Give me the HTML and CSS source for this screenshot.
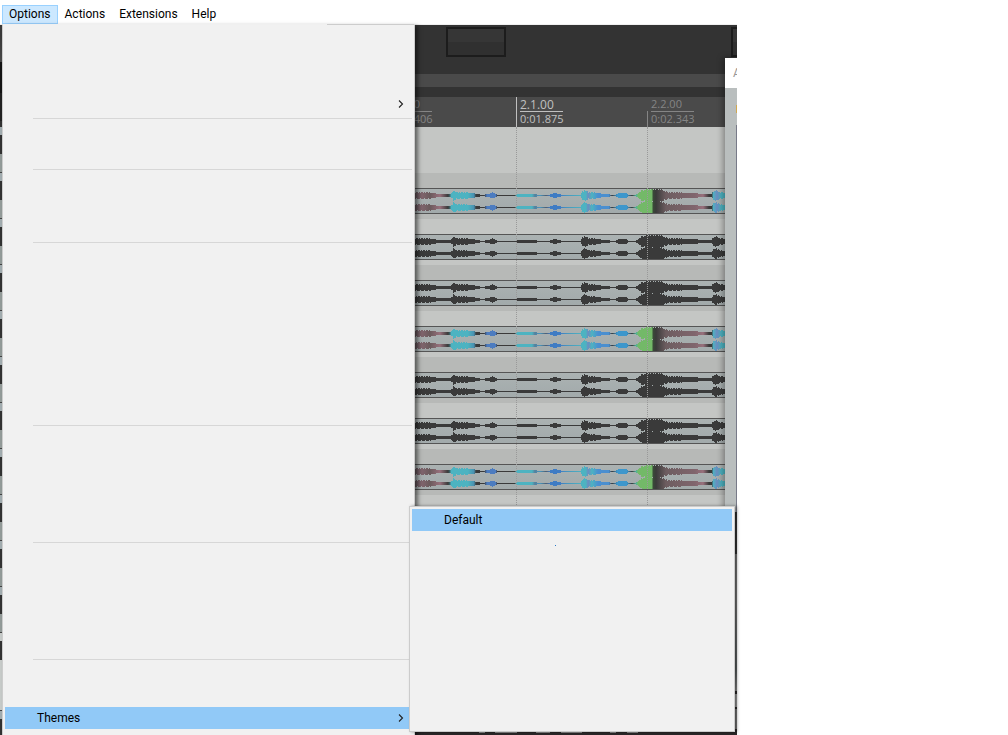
FILE: index.html
```
<!DOCTYPE html>
<html lang="en">
<head>
  <meta charset="UTF-8">
  <title>Options</title>
  <link rel="stylesheet" href="styles.css">
</head>
<body>
  <nav class="menubar">
    <div class="menubar-entry">
      <button class="menubar-button open">Options</button>
      <ul class="menu options-menu">
        <li class="row"></li>
        <li class="row"></li>
        <li class="row"></li>
        <li class="row"><button class="item" aria-label="Submenu"><svg class="arrow" viewBox="0 0 6 8"><path d="M1 0.5 L4.5 4 L1 7.5"/></svg></button></li>
        <li class="separator"></li>
        <li class="row"></li>
        <li class="row"></li>
        <li class="separator"></li>
        <li class="row"></li>
        <li class="row"></li>
        <li class="row"></li>
        <li class="separator"></li>
        <li class="row"></li>
        <li class="row"></li>
        <li class="row"></li>
        <li class="row"></li>
        <li class="row"></li>
        <li class="row"></li>
        <li class="row"></li>
        <li class="row"></li>
        <li class="separator"></li>
        <li class="row"></li>
        <li class="row"></li>
        <li class="row"></li>
        <li class="row"></li>
        <li class="row"></li>
        <li class="separator"></li>
        <li class="row"></li>
        <li class="row"></li>
        <li class="row"></li>
        <li class="row"></li>
        <li class="row"></li>
        <li class="separator"></li>
        <li class="row"></li>
        <li class="row"></li>
        <li class="row">
          <button class="item active">Themes<svg class="arrow" viewBox="0 0 6 8"><path d="M1 0.5 L4.5 4 L1 7.5"/></svg></button>
          <ul class="menu submenu">
            <li class="row"><button class="item active">Default</button></li>
            <li class="row speck"></li>
            <li class="row"></li>
            <li class="row"></li>
            <li class="row"></li>
            <li class="row"></li>
            <li class="row"></li>
            <li class="row"></li>
            <li class="row"></li>
            <li class="row"></li>
          </ul>
        </li>
        <li class="row"></li>
      </ul>
    </div>
    <button class="menubar-button">Actions</button>
    <button class="menubar-button">Extensions</button>
    <button class="menubar-button">Help</button>
  </nav>

  <main class="app">
    <div class="track-panel">
      <div class="panel-top"></div>
      <div class="panel-tracks"></div>
      <div class="panel-master"></div>
      <div class="panel-foot"></div>
    </div>

    <div class="arrange">
      <div class="toolbar">
        <div class="toolbox"></div>
        <div class="toolbox"></div>
      </div>
      <div class="scroll-strip"></div>
      <div class="ruler">
        <div class="mark"><span class="beat">1.2.00</span><span class="time">0:01.406</span></div>
        <div class="mark major"><span class="beat">2.1.00</span><span class="time">0:01.875</span></div>
        <div class="mark"><span class="beat">2.2.00</span><span class="time">0:02.343</span></div>
      </div>
      <div class="lanes" id="lanes">
        <div class="grid"><i></i><i></i><i></i></div>
        <div class="lane"></div>
      </div>
      <div class="mixer"><div class="meters"></div></div>
    </div>

    <aside class="window">
      <div class="window-title">A</div>
      <div class="window-body"></div>
    </aside>
  </main>

  <svg class="defs" aria-hidden="true">
    <defs>
      <linearGradient id="spectral" gradientUnits="userSpaceOnUse" x1="385" y1="0" x2="737" y2="0"></linearGradient>
    </defs>
  </svg>

  <script src="script.js"></script>
</body>
</html>
```
FILE: styles.css
```
* { box-sizing: border-box; }
body {
  margin: 0;
  height: 100vh;
  display: flex;
  flex-direction: column;
  overflow: hidden;
  background: #fff;
  font: 12px/16px Roboto, "Open Sans", sans-serif;
  color: #000;
}
button { font: inherit; color: inherit; border: 0; background: none; margin: 0; }
ul { list-style: none; margin: 0; padding: 0; }
.defs { position: absolute; width: 0; height: 0; }

/* menu bar */
.menubar { display: flex; height: 24px; padding: 5px 0 0 2px; }
.menubar-entry { position: relative; z-index: 5; }
.menubar-button { display: block; height: 19px; padding: 0 6px; border: 1px solid transparent; line-height: 17px; }
.menubar-button.open { background: #cce8ff; border-color: #99d1ff; }

/* menus */
.menu { position: absolute; background: #f1f1f1; border: 1px solid #ccc; padding: 2px; }
.options-menu { top: 19px; left: 0; width: 413px; border-top-color: #f0f0f0; box-shadow: 3px 2px 4px rgba(0, 0, 0, .5); }
.options-menu::before { content: ""; position: absolute; top: -1px; right: 0; width: 87px; height: 1px; background: #ccc; }
.row { position: relative; height: 22px; }
.item { display: flex; align-items: center; justify-content: space-between; width: 100%; height: 22px; padding: 0 8px 0 32px; text-align: left; }
.item[aria-label] { justify-content: flex-end; }
.item.active { background: #91c9f7; }
.arrow { width: 6px; height: 8px; fill: none; stroke: #222; stroke-width: 1.1; }
.separator { height: 7px; padding: 3px 0 3px 28px; }
.separator::after { content: ""; display: block; height: 1px; background: #d7d7d7; }
.submenu { left: calc(100% - 3px); bottom: -3px; width: 326px; box-shadow: 2px 0 3px rgba(0, 0, 0, .4); }
.speck::after { content: ""; display: block; width: 1px; height: 1px; margin-left: 143px; position: relative; top: 14px; background: #2a7ac8; }

/* application behind the menus */
.app { position: relative; flex: 1; display: flex; margin-right: 271px; border-top: 1px solid #f0f0f0; overflow: hidden; background: #333; }
.track-panel { width: 385px; display: flex; flex-direction: column; }
.panel-top { height: 102px; background: linear-gradient(#3a3a3a 0 10px, #4a4a4a 37px, #151515 37px 68px, #222 68px 96px, #333 96px); }
.panel-tracks { height: 506px; background: repeating-linear-gradient(#a3aeb1 0 8px, #333 8px 27px, #949c9a 27px 45px, #444 45px 46px); }
.panel-master { height: 86px; background: linear-gradient(#c8ccca 0 8px, #333 8px 27px, #c8ccca 27px 77px, #444 77px 78px, #a3aeb1 78px); }
.panel-foot { flex: 1; background: #333; }

.arrange { flex: 1; min-width: 0; display: flex; flex-direction: column; }
.toolbar { display: flex; gap: 225px; height: 49px; padding: 2px 0 0 61px; overflow: hidden; }
.toolbox { flex: none; width: 60px; height: 30px; border: 2px solid #1c1c1c; background: linear-gradient(#363636 50%, #303030 50%); }
.scroll-strip { height: 23px; border-bottom: 10px solid #333; background: #4a4a4a; }
.ruler { display: flex; height: 30px; background: #4a4a4a; overflow: hidden; color: #858585; font: 11px/14px "Open Sans", sans-serif; }
.mark { flex: none; width: 131px; padding-left: 4px; background: linear-gradient(#858585, #858585) 0 100% / 1px 16px no-repeat; }
.mark span { display: block; width: 43px; }
.mark .beat { height: 15px; border-bottom: 1px solid #858585; }
.mark.major { color: #c0c0c0; background-size: 1px 100%; background-image: linear-gradient(#c0c0c0, #c0c0c0); }
.mark.major .beat { border-color: #c0c0c0; font-size: 12px; line-height: 16px; }

.lanes { position: relative; background: #c4c6c4; padding-bottom: 14px; }
.lane { height: 46px; background: #c4c6c4; }
.lane:nth-child(odd) { background: #b7b9b7; }
.lane.track { padding-top: 15px; }
.clip { height: 26px; border: solid #555; border-width: 1px 0; background: linear-gradient(#abb2b2, #a2aaab); overflow: hidden; }
.clip svg { display: block; width: 352px; height: 24px; }
.plain { fill: #3a3a3a; }
.colored { fill: url(#spectral); }
.grid { position: absolute; inset: 0; display: flex; overflow: hidden; }
.grid i { flex: none; width: 131px; border-left: 1px dotted #999; }

.mixer { flex: 1; display: flex; align-items: flex-end; background: linear-gradient(#333 0 45px, #777 45px 90px, #5a5f60 160px, #888 182px, #2a2728 182px 185px, #999 185px 198px, #2a2728 198px 200px, #777 200px 220px, #2a2728 220px); }
.meters {
  flex: 1;
  height: 3px;
  background: linear-gradient(90deg, transparent 94px, #858585 94px 100px, transparent 100px 110px, #858585 110px 132px, transparent 132px 151px, #858585 151px 165px, transparent 165px 176px, #858585 176px 197px, transparent 197px 225px, #858585 225px 231px, transparent 231px 242px, #858585 242px 253px, transparent 253px) 0 0 / 100% 1px no-repeat #2a2728;
}

/* window on top of the arrangement */
.window { position: absolute; top: 33px; right: 0; bottom: 223px; width: 12px; overflow: hidden; display: flex; flex-direction: column; box-shadow: -2px 0 6px rgba(0, 0, 0, .35); }
.window-title { height: 30px; padding-left: 8px; line-height: 30px; background: #fff; color: #999; }
.window-body { flex: 1; background: linear-gradient(#b9bebe 17px, #d0a850 17px 25px, #b9bebe 25px 37px, #777a88 37px) 100% 0 / 1px 100% no-repeat #b9bebe; }
```
FILE: script.js
```
// half-heights of the waveform, as [x, amplitude] on the timeline
const envelope = [
  [385, 1], [410, 3], [428, 3], [434, 1.6], [440, 1], [450, 1], [453, 4.5], [456, 3], [464, 3],
  [470, 2], [479, 1], [480, 0], [484, 0], [485, 1], [489, 1], [492, 2.5], [495, 1], [497, 0],
  [515, 0], [516, 1], [535, 1], [537, 0], [548, 0], [551, 1], [555, 2], [558, 1],
  [562, 0], [580, 0], [582, 4], [585, 5], [588, 3], [594, 3], [599, 1.6], [609, 1],
  [610, 0], [615, 0], [617, 1], [619, 2], [625, 2], [627, 1], [628, 0], [635, 0], [638, 2],
  [641, 5], [648, 6], [660, 6], [665, 4], [668, 3], [694, 2], [700, 1], [711, 1],
  [713, 4], [716, 5], [719, 3], [725, 2], [737, 2]
];

const colors = [
  [385, "#4a4548"], [415, "#6a5a60"], [422, "#80656d"], [430, "#6a5a5c"], [440, "#98707c"], [448, "#3a3a3a"], [450, "#3a6a70"],
  [451, "#4db3c1"], [468, "#4db3c1"], [474, "#4a90b0"], [476, "#3a3a3a"], [484, "#3a3a3a"],
  [487, "#4c7cc0"], [496, "#4c7cc0"], [497, "#3a3a3a"], [515, "#3a3a3a"], [516, "#4db3c1"],
  [532, "#4db3c1"], [535, "#557f9c"], [540, "#4798c0"], [546, "#4f5d70"], [550, "#3f7cc4"],
  [560, "#3f7cc4"], [568, "#4798c0"], [582, "#4db3c1"], [586, "#4db3c1"], [588, "#6c8cc0"],
  [592, "#4db3c1"], [598, "#4a8fd0"], [609, "#4a8fd0"], [612, "#3a3a3a"], [617, "#3d97cc"],
  [627, "#3d97cc"], [632, "#3a3a3a"], [636, "#4db3a0"], [638, "#73b968"], [652, "#73b968"],
  [653, "#3a4a38"], [656, "#3a3a3a"], [666, "#6d5d60"], [695, "#80656d"], [703, "#98707c"],
  [709, "#3a3a3a"], [712, "#3a3a3a"], [713, "#4db3c1"], [717, "#6c8cc0"], [721, "#4db3c1"],
  [737, "#4db3c1"]
];

function amplitude(x) {
  for (let i = 1; i < envelope.length; i++) {
    const [x0, a0] = envelope[i - 1];
    const [x1, a1] = envelope[i];
    if (x <= x1) return a0 + (a1 - a0) * (x - x0) / (x1 - x0);
  }
  return 0;
}

// one pixel column per sample, with a little ripple on the loud parts
function channel(center, phase) {
  let d = "";
  for (let x = 385; x < 737; x++) {
    const a = Math.round(amplitude(x));
    const up = a > 2 && (x * 7 + phase) % 5 < 2 ? a - 1 : a;
    const down = a > 2 && (x * 3 + phase) % 4 < 1 ? a - 1 : a;
    d += `M${x} ${center - up}h1v${up + down + 1}h-1z`;
  }
  return d;
}

const stops = colors.map(([x, c]) => `<stop offset="${(x - 385) / 352}" stop-color="${c}"/>`);
document.getElementById("spectral").innerHTML = stops.join("");

const wave = channel(6, 0) + channel(18, 1);
const lanes = document.getElementById("lanes");
for (let i = 0; i < 7; i++) {
  const lane = document.createElement("div");
  lane.className = "lane track";
  lane.innerHTML = `<div class="clip"><svg viewBox="385 0 352 24" shape-rendering="crispEdges">
    <path class="${i % 3 === 0 ? "colored" : "plain"}" d="${wave}"/></svg></div>`;
  lanes.appendChild(lane);
}
```
